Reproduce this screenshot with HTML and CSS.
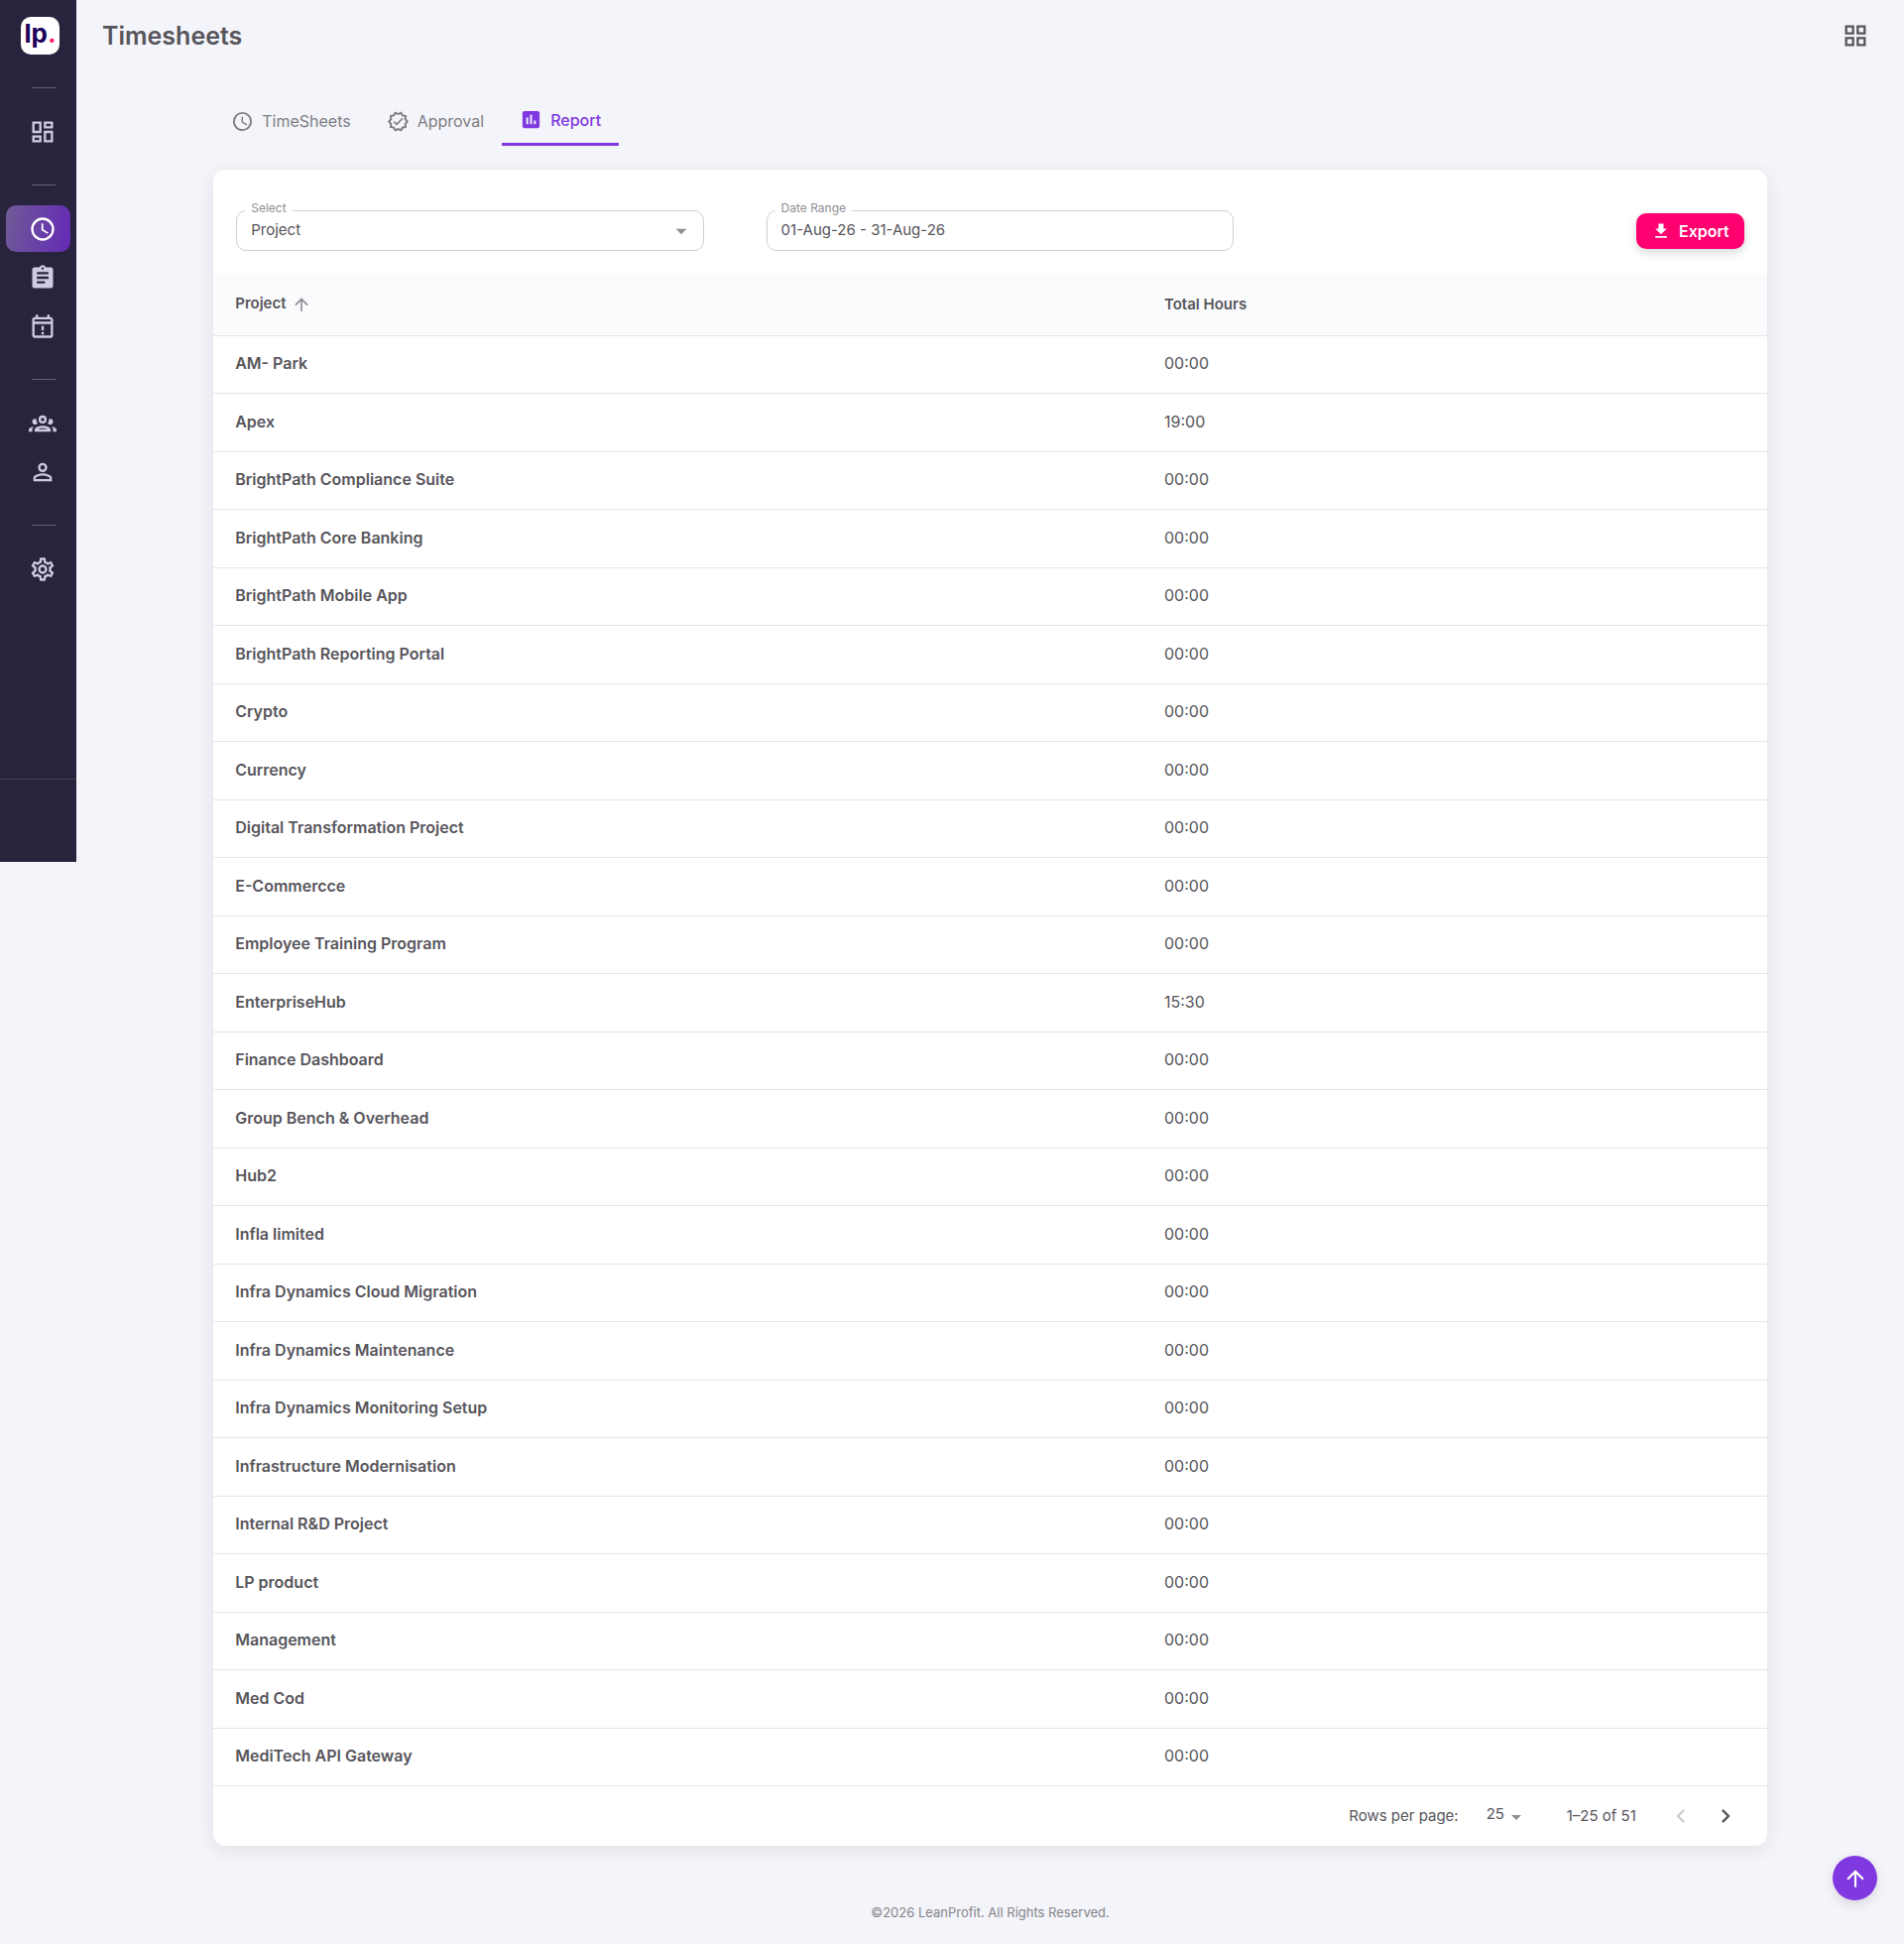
FILE: index.html
```
<!DOCTYPE html>
<html lang="en">
<head>
    <meta charset="UTF-8">
    <meta name="viewport" content="width=device-width, initial-scale=1.0">
    <title>Timesheets</title>
    <link rel="stylesheet" href="styles.css">
</head>
<body>
    <div class="layout">
        <aside class="sidebar">
            <a class="logo" href="#" aria-label="LeanProfit">lp<span>.</span></a>
            <nav class="menu">
                <hr>
                <a href="#" aria-label="Dashboard">
                    <svg viewBox="0 0 24 24"><path d="M19 5v2h-4V5h4M9 5v6H5V5h4m10 8v6h-4v-6h4M9 17v2H5v-2h4M21 3h-8v6h8V3zM11 3H3v10h8V3zm10 8h-8v10h8V11zm-10 4H3v6h8v-6z"/></svg>
                </a>
                <hr>
                <a href="#" class="active" aria-label="Timesheets">
                    <svg viewBox="0 0 24 24"><path d="M12,20A8,8 0 0,0 20,12A8,8 0 0,0 12,4A8,8 0 0,0 4,12A8,8 0 0,0 12,20M12,2A10,10 0 0,1 22,12A10,10 0 0,1 12,22C6.47,22 2,17.5 2,12A10,10 0 0,1 12,2M12.5,7V12.25L17,14.92L16.25,16.15L11,13V7H12.5Z"/></svg>
                </a>
                <a href="#" aria-label="Projects">
                    <svg viewBox="0 0 24 24"><path d="M19 3h-4.18C14.4 1.84 13.3 1 12 1c-1.3 0-2.4.84-2.82 2H5c-1.1 0-2 .9-2 2v14c0 1.1.9 2 2 2h14c1.1 0 2-.9 2-2V5c0-1.1-.9-2-2-2zm-7 0c.55 0 1 .45 1 1s-.45 1-1 1-1-.45-1-1 .45-1 1-1zm2 14H7v-2h7v2zm3-4H7v-2h10v2zm0-4H7V7h10v2z"/></svg>
                </a>
                <a href="#" aria-label="Leave">
                    <svg viewBox="0 0 24 24"><path d="M19 4h-1V2h-2v2H8V2H6v2H5c-1.11 0-2 .9-2 2v14a2 2 0 0 0 2 2h14c1.1 0 2-.9 2-2V6c0-1.1-.9-2-2-2zm0 16H5V10h14v10zm0-12H5V6h14v2zM11 11.5h2v4h-2zM11 17h2v2h-2z"/></svg>
                </a>
                <hr>
                <a href="#" aria-label="Teams">
                    <svg viewBox="0 0 24 24"><path d="M12,5A3.5,3.5 0 0,0 8.5,8.5A3.5,3.5 0 0,0 12,12A3.5,3.5 0 0,0 15.5,8.5A3.5,3.5 0 0,0 12,5M12,7A1.5,1.5 0 0,1 13.5,8.5A1.5,1.5 0 0,1 12,10A1.5,1.5 0 0,1 10.5,8.5A1.5,1.5 0 0,1 12,7M5.5,8A2.5,2.5 0 0,0 3,10.5C3,11.44 3.53,12.25 4.29,12.68C4.65,12.88 5.06,13 5.5,13C5.94,13 6.35,12.88 6.71,12.68C7.08,12.47 7.39,12.17 7.62,11.81C6.89,10.86 6.5,9.7 6.5,8.5C6.5,8.41 6.5,8.31 6.5,8.22C6.2,8.08 5.86,8 5.5,8M18.5,8C18.14,8 17.8,8.08 17.5,8.22C17.5,8.31 17.5,8.41 17.5,8.5C17.5,9.7 17.11,10.86 16.38,11.81C16.5,12 16.63,12.15 16.78,12.3C16.94,12.45 17.1,12.58 17.29,12.68C17.65,12.88 18.06,13 18.5,13C18.94,13 19.35,12.88 19.71,12.68C20.47,12.25 21,11.44 21,10.5A2.5,2.5 0 0,0 18.5,8M12,14C9.66,14 5,15.17 5,17.5V19H19V17.5C19,15.17 14.34,14 12,14M4.71,14.55C2.78,14.78 0,15.76 0,17.5V19H3V17.07C3,16.06 3.69,15.22 4.71,14.55M19.29,14.55C20.31,15.22 21,16.06 21,17.07V19H24V17.5C24,15.76 21.22,14.78 19.29,14.55M12,16C13.53,16 15.24,16.5 16.23,17H7.77C8.76,16.5 10.47,16 12,16Z"/></svg>
                </a>
                <a href="#" aria-label="Profile">
                    <svg viewBox="0 0 24 24"><path d="M12,4A4,4 0 0,1 16,8A4,4 0 0,1 12,12A4,4 0 0,1 8,8A4,4 0 0,1 12,4M12,6A2,2 0 0,0 10,8A2,2 0 0,0 12,10A2,2 0 0,0 14,8A2,2 0 0,0 12,6M12,13C14.67,13 20,14.33 20,17V20H4V17C4,14.33 9.33,13 12,13M12,14.9C9.03,14.9 5.9,16.36 5.9,17V18.1H18.1V17C18.1,16.36 14.97,14.9 12,14.9Z"/></svg>
                </a>
                <hr>
                <a href="#" aria-label="Settings">
                    <svg viewBox="0 0 24 24"><path d="M12,8A4,4 0 0,1 16,12A4,4 0 0,1 12,16A4,4 0 0,1 8,12A4,4 0 0,1 12,8M12,10A2,2 0 0,0 10,12A2,2 0 0,0 12,14A2,2 0 0,0 14,12A2,2 0 0,0 12,10M10,22C9.75,22 9.54,21.82 9.5,21.58L9.13,18.93C8.5,18.68 7.96,18.34 7.44,17.94L4.95,18.95C4.73,19.03 4.46,18.95 4.34,18.73L2.34,15.27C2.21,15.05 2.27,14.78 2.46,14.63L4.57,12.97L4.5,12L4.57,11L2.46,9.37C2.27,9.22 2.21,8.95 2.34,8.73L4.34,5.27C4.46,5.05 4.73,4.96 4.95,5.05L7.44,6.05C7.96,5.66 8.5,5.32 9.13,5.07L9.5,2.42C9.54,2.18 9.75,2 10,2H14C14.25,2 14.46,2.18 14.5,2.42L14.87,5.07C15.5,5.32 16.04,5.66 16.56,6.05L19.05,5.05C19.27,4.96 19.54,5.05 19.66,5.27L21.66,8.73C21.79,8.95 21.73,9.22 21.54,9.37L19.43,11L19.5,12L19.43,13L21.54,14.63C21.73,14.78 21.79,15.05 21.66,15.27L19.66,18.73C19.54,18.95 19.27,19.04 19.05,18.95L16.56,17.95C16.04,18.34 15.5,18.68 14.87,18.93L14.5,21.58C14.46,21.82 14.25,22 14,22H10M11.25,4L10.88,6.61C9.68,6.86 8.62,7.5 7.85,8.39L5.44,7.35L4.69,8.65L6.8,10.2C6.4,11.37 6.4,12.64 6.8,13.8L4.68,15.36L5.43,16.66L7.86,15.62C8.63,16.5 9.68,17.14 10.87,17.38L11.24,20H12.76L13.13,17.39C14.32,17.14 15.37,16.5 16.14,15.62L18.57,16.66L19.32,15.36L17.2,13.81C17.6,12.64 17.6,11.37 17.2,10.2L19.31,8.65L18.56,7.35L16.15,8.39C15.38,7.5 14.32,6.86 13.12,6.62L12.75,4H11.25Z"/></svg>
                </a>
            </nav>
            <div class="sidebar-footer"></div>
        </aside>

        <div class="main">
            <header class="topbar">
                <h1>Timesheets</h1>
                <button type="button" class="icon-btn" aria-label="Apps">
                    <svg viewBox="0 0 24 24"><path d="M3 3v8h8V3H3zm6 6H5V5h4v4zm-6 4v8h8v-8H3zm6 6H5v-4h4v4zm4-16v8h8V3h-8zm6 6h-4V5h4v4zm-6 4v8h8v-8h-8zm6 6h-4v-4h4v4z"/></svg>
                </button>
            </header>

            <main class="content">
                <nav class="tabs">
                    <a href="#">
                        <svg viewBox="0 0 24 24"><path d="M12,20A8,8 0 0,0 20,12A8,8 0 0,0 12,4A8,8 0 0,0 4,12A8,8 0 0,0 12,20M12,2A10,10 0 0,1 22,12A10,10 0 0,1 12,22C6.47,22 2,17.5 2,12A10,10 0 0,1 12,2M12.5,7V12.25L17,14.92L16.25,16.15L11,13V7H12.5Z"/></svg>
                        TimeSheets
                    </a>
                    <a href="#">
                        <svg viewBox="0 0 24 24"><path d="M23 12L20.6 9.2L20.9 5.5L17.3 4.7L15.4 1.5L12 3L8.6 1.5L6.7 4.7L3.1 5.5L3.4 9.2L1 12L3.4 14.8L3.1 18.5L6.7 19.3L8.6 22.5L12 21L15.4 22.5L17.3 19.3L20.9 18.5L20.6 14.8L23 12M18.7 16.9L16 17.5L14.6 19.9L12 18.8L9.4 19.9L8 17.5L5.3 16.9L5.5 14.1L3.7 12L5.5 9.9L5.3 7.1L8 6.5L9.4 4.1L12 5.2L14.6 4.1L16 6.5L18.7 7.1L18.5 9.9L20.3 12L18.5 14.1L18.7 16.9M16.2 8L17.4 9.2L10.4 16.2L6.8 12.6L8 11.4L10.4 13.8L16.2 8Z"/></svg>
                        Approval
                    </a>
                    <a href="#" class="selected">
                        <svg viewBox="0 0 24 24"><path d="M19 3H5c-1.1 0-2 .9-2 2v14c0 1.1.9 2 2 2h14c1.1 0 2-.9 2-2V5c0-1.1-.9-2-2-2zM9 17H7v-7h2v7zm4 0h-2V7h2v10zm4 0h-2v-4h2v4z"/></svg>
                        Report
                    </a>
                </nav>

                <section class="card">
                    <form class="filters">
                        <div class="field">
                            <label for="groupBy">Select</label>
                            <select id="groupBy">
                                <option>Project</option>
                            </select>
                            <svg class="caret" viewBox="0 0 24 24"><path d="M7 10l5 5 5-5z"/></svg>
                        </div>
                        <div class="field">
                            <label for="dateRange">Date Range</label>
                            <input type="text" id="dateRange" value="01-Aug-26 - 31-Aug-26">
                        </div>
                        <button type="button" class="export-btn">
                            <svg viewBox="0 0 24 24"><path d="M19 9h-4V3H9v6H5l7 7 7-7zM5 18v2h14v-2H5z"/></svg>
                            Export
                        </button>
                    </form>

                    <table class="report">
                        <thead>
                            <tr>
                                <th>Project <svg viewBox="0 0 24 24"><path d="M4 12l1.41 1.41L11 7.83V20h2V7.83l5.58 5.59L20 12l-8-8-8 8z"/></svg></th>
                                <th>Total Hours</th>
                            </tr>
                        </thead>
                        <tbody>
                            <tr><td>AM- Park</td><td>00:00</td></tr>
                            <tr><td>Apex</td><td>19:00</td></tr>
                            <tr><td>BrightPath Compliance Suite</td><td>00:00</td></tr>
                            <tr><td>BrightPath Core Banking</td><td>00:00</td></tr>
                            <tr><td>BrightPath Mobile App</td><td>00:00</td></tr>
                            <tr><td>BrightPath Reporting Portal</td><td>00:00</td></tr>
                            <tr><td>Crypto</td><td>00:00</td></tr>
                            <tr><td>Currency</td><td>00:00</td></tr>
                            <tr><td>Digital Transformation Project</td><td>00:00</td></tr>
                            <tr><td>E-Commercce</td><td>00:00</td></tr>
                            <tr><td>Employee Training Program</td><td>00:00</td></tr>
                            <tr><td>EnterpriseHub</td><td>15:30</td></tr>
                            <tr><td>Finance Dashboard</td><td>00:00</td></tr>
                            <tr><td>Group Bench &amp; Overhead</td><td>00:00</td></tr>
                            <tr><td>Hub2</td><td>00:00</td></tr>
                            <tr><td>Infla limited</td><td>00:00</td></tr>
                            <tr><td>Infra Dynamics Cloud Migration</td><td>00:00</td></tr>
                            <tr><td>Infra Dynamics Maintenance</td><td>00:00</td></tr>
                            <tr><td>Infra Dynamics Monitoring Setup</td><td>00:00</td></tr>
                            <tr><td>Infrastructure Modernisation</td><td>00:00</td></tr>
                            <tr><td>Internal R&amp;D Project</td><td>00:00</td></tr>
                            <tr><td>LP product</td><td>00:00</td></tr>
                            <tr><td>Management</td><td>00:00</td></tr>
                            <tr><td>Med Cod</td><td>00:00</td></tr>
                            <tr><td>MediTech API Gateway</td><td>00:00</td></tr>
                        </tbody>
                    </table>

                    <div class="pagination">
                        <label for="rows">Rows per page:</label>
                        <div class="rows-select">
                            <select id="rows">
                                <option>25</option>
                            </select>
                            <svg class="caret" viewBox="0 0 24 24"><path d="M7 10l5 5 5-5z"/></svg>
                        </div>
                        <span>1–25 of 51</span>
                        <div class="pager">
                            <button type="button" disabled aria-label="Previous page">
                                <svg viewBox="0 0 24 24"><path d="M15.41 16.59L10.83 12l4.58-4.59L14 6l-6 6 6 6z"/></svg>
                            </button>
                            <button type="button" aria-label="Next page">
                                <svg viewBox="0 0 24 24"><path d="M8.59 16.59L13.17 12 8.59 7.41 10 6l6 6-6 6z"/></svg>
                            </button>
                        </div>
                    </div>
                </section>
            </main>

            <footer class="footer">©2026 LeanProfit. All Rights Reserved.</footer>
        </div>
    </div>

    <button type="button" class="scroll-top" aria-label="Back to top">
        <svg viewBox="0 0 24 24"><path d="M4 12l1.41 1.41L11 7.83V20h2V7.83l5.58 5.59L20 12l-8-8-8 8z"/></svg>
    </button>
</body>
</html>
```
FILE: styles.css
```
* {
    box-sizing: border-box;
}
body {
    margin: 0;
    background-color: #f4f5fa;
    color: #57555b;
    font-family: Inter, "Open Sans", sans-serif;
    font-size: 15px;
    line-height: 20px;
}
a {
    text-decoration: none;
    color: inherit;
}
button, input, select {
    font: inherit;
    color: inherit;
}
button {
    border: none;
    background: none;
    padding: 0;
    cursor: pointer;
}
svg {
    display: block;
    fill: currentColor;
}
.layout {
    display: flex;
    align-items: flex-start;
}

/* Sidebar */
.sidebar {
    display: flex;
    flex: none;
    flex-direction: column;
    width: 77px;
    background-color: #28243d;
    color: #cfcbe2;
}
.logo {
    width: 39px;
    height: 38px;
    margin: 17px 0 4px 21px;
    border-radius: 10px;
    background-color: #fff;
    color: #1d0257;
    font-size: 26px;
    font-weight: 700;
    line-height: 34px;
    text-align: center;
}
.logo span {
    color: #ff1a75;
}
.menu {
    display: flex;
    flex-direction: column;
    padding-bottom: 187px;
}
.menu hr {
    width: 24px;
    height: 1px;
    margin: 29px 0 19px 32px;
    border: none;
    background-color: #65617a;
}
.menu a {
    display: flex;
    align-items: center;
    height: 47px;
    margin: 1px 6px;
    padding-left: 23px;
    border-radius: 10px;
}
.menu svg {
    width: 28px;
    height: 28px;
}
.menu .active {
    background: linear-gradient(98deg, #6f5a96, #652db4 94%);
    color: #fff;
}
.sidebar-footer {
    height: 84px;
    border-top: 1px solid #433f56;
}

/* Page */
.main {
    flex: 1;
    min-width: 0;
}
.topbar {
    display: flex;
    align-items: center;
    justify-content: space-between;
    height: 72px;
    padding: 0 35px 0 26px;
}
h1 {
    margin: 0;
    font-size: 25px;
    font-weight: 600;
    line-height: 32px;
}
.icon-btn svg {
    width: 28px;
    height: 28px;
}
.content {
    width: 85%;
    margin: 0 auto;
}
.tabs {
    display: flex;
    height: 75px;
    margin-bottom: 24px;
    padding-top: 25px;
}
.tabs a {
    display: flex;
    align-items: center;
    gap: 8px;
    padding: 0 18px;
    color: #7f7d84;
    font-size: 16px;
}
.tabs svg {
    width: 23px;
    height: 23px;
}
.tabs .selected {
    border-bottom: 3px solid #8038e0;
    color: #8038e0;
    font-weight: 500;
}

/* Card */
.card {
    border-radius: 12px;
    background-color: #fff;
    box-shadow: 0 4px 18px rgba(58, 63, 65, 0.1);
}
.filters {
    display: flex;
    align-items: center;
    gap: 63px;
    padding: 41px 23px 23px;
}
.field {
    position: relative;
    width: 31%;
}
.field label {
    position: absolute;
    top: -10px;
    left: 9px;
    padding: 0 6px;
    background-color: #fff;
    color: #8f8d93;
    font-size: 12px;
    line-height: 16px;
}
.field input, .field select {
    display: block;
    width: 100%;
    height: 41px;
    padding: 0 14px 2px;
    border: 1px solid #cfced1;
    border-radius: 10px;
    background-color: #fff;
    appearance: none;
}
.caret {
    position: absolute;
    top: 8px;
    right: 10px;
    width: 26px;
    height: 26px;
    color: #8f8d93;
    pointer-events: none;
}
.export-btn {
    display: flex;
    align-items: center;
    gap: 8px;
    height: 36px;
    margin-left: auto;
    padding: 0 15px;
    border-radius: 10px;
    background-color: #ff0070;
    color: #fff;
    font-size: 16px;
    font-weight: 600;
    box-shadow: 0 4px 10px rgba(58, 63, 65, 0.2);
}
.export-btn svg {
    width: 20px;
    height: 20px;
}

/* Table */
.report {
    width: 100%;
    border-collapse: collapse;
    table-layout: fixed;
}
.report th, .report td {
    padding: 0 22px;
    border-bottom: 1px solid #e5e5e8;
    text-align: left;
}
.report th {
    height: 62px;
    background-color: #fafbfd;
    font-size: 15px;
    font-weight: 600;
}
.report th:first-child {
    width: 59.8%;
}
.report th svg {
    display: inline-block;
    width: 20px;
    height: 20px;
    margin-left: 2px;
    vertical-align: middle;
    color: #8f8d93;
}
.report td {
    height: 58px;
    padding-bottom: 2px;
    font-size: 16px;
}
.report tr:nth-child(even) td {
    height: 59px;
}
.report td:first-child {
    font-weight: 600;
}

/* Pagination */
.pagination {
    display: flex;
    align-items: center;
    justify-content: flex-end;
    height: 60px;
    padding-right: 28px;
}
.rows-select {
    position: relative;
    margin: 0 41px 4px 28px;
}
.rows-select select {
    display: block;
    width: 40px;
    padding: 0;
    border: none;
    background: none;
    appearance: none;
}
.rows-select .caret {
    top: 1px;
    right: -2px;
    width: 24px;
    height: 24px;
}
.pager {
    display: flex;
    gap: 17px;
    margin-left: 31px;
}
.pager svg {
    width: 28px;
    height: 28px;
}
.pager button:disabled {
    color: #cfced1;
}

.footer {
    padding: 57px 0 22px;
    color: #85838a;
    font-size: 13px;
    text-align: center;
}
.scroll-top {
    position: fixed;
    right: 27px;
    bottom: 44px;
    display: flex;
    align-items: center;
    justify-content: center;
    width: 45px;
    height: 45px;
    border-radius: 50%;
    background-color: #8038e0;
    color: #fff;
    box-shadow: 0 4px 12px rgba(58, 53, 65, 0.15);
}
.scroll-top svg {
    width: 26px;
    height: 26px;
}
```
